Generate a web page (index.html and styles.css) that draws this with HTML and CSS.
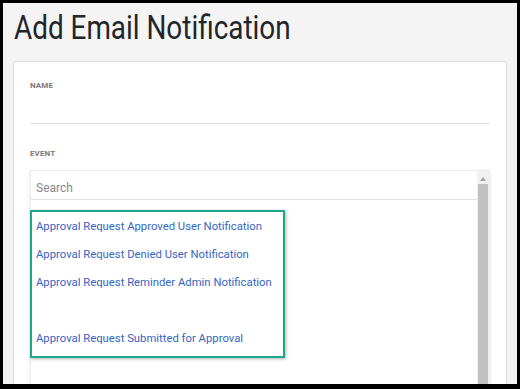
FILE: index.html
```html
<!DOCTYPE html>
<html>
<head>
<meta charset="utf-8">
<link rel="stylesheet" href="styles.css">
</head>
<body>
<div class="page">
  <h1 class="title"><span class="title-text">Add Email Notification</span></h1>
  <div class="card">
    <div class="field">
      <div class="label">NAME</div>
      <div class="input-line"></div>
    </div>
    <div class="field event">
      <div class="label">EVENT</div>
      <div class="dropdown">
        <div class="dd-main">
          <div class="search">Search</div>
          <ul class="options">
            <li>Approval Request Approved User Notification</li>
            <li>Approval Request Denied User Notification</li>
            <li>Approval Request Reminder Admin Notification</li>
            <li class="empty"></li>
            <li>Approval Request Submitted for Approval</li>
          </ul>
          <div class="highlight"></div>
        </div>
        <div class="scrollbar">
          <div class="arrow"></div>
          <div class="thumb"></div>
        </div>
      </div>
    </div>
  </div>
</div>
</body>
</html>
```
FILE: styles.css
```css
* { box-sizing: border-box; }
html, body { margin: 0; padding: 0; }
body {
  background: #000;
  padding: 3px 3px 0 3px;
  font-family: Roboto, "Liberation Sans", sans-serif;
}
.page {
  width: 514px;
  height: 381px;
  background: #f4f4f4;
  padding: 0 11px 0 11px;
  overflow: hidden;
}
.title {
  margin: 0;
  height: 59px;
  padding-top: 4px;
  font-weight: 400;
  font-size: 34px;
  line-height: 40px;
  color: #222529;
  white-space: nowrap;
}
.title-text {
  display: inline-block;
  transform: scaleX(0.82);
  transform-origin: left center;
}
.card {
  background: #fff;
  border-radius: 3px;
  box-shadow: 0 0 3px rgba(0,0,0,0.18);
  padding: 19px 16px 0 16px;
  height: 340px;
}
.label {
  font-size: 8px;
  font-weight: 700;
  color: #7a7a7a;
  line-height: 10px;
  letter-spacing: 0.1px;
}
.input-line {
  margin-top: 32px;
  height: 1px;
  background: #dcdcdc;
}
.event { margin-top: 25px; }
.event .label { margin-bottom: 11px; }
.dropdown {
  display: flex;
  border: 1px solid #ececec;
  box-shadow: 0 1px 3px rgba(0,0,0,0.12);
  height: 230px;
}
.dd-main {
  flex: 1;
  position: relative;
}
.search {
  height: 29px;
  padding: 4px 0 0 5px;
  font-size: 12px;
  line-height: 26px;
  color: #8a8a8a;
  border-bottom: 1px solid #dde1e6;
}
.options {
  list-style: none;
  margin: 0;
  padding: 13px 0 0 5px;
}
.options li {
  height: 28px;
  line-height: 28px;
  font-size: 11.3px;
  color: #3565c2;
  white-space: nowrap;
}
.highlight {
  position: absolute;
  left: -1px;
  top: 39px;
  width: 255px;
  height: 148px;
  border: 2px solid #1aa98a;
  box-shadow: 1px 1px 3px rgba(0,0,0,0.3);
}
.scrollbar {
  width: 12px;
  background: #f1f1f1;
  display: flex;
  flex-direction: column;
  align-items: center;
}
.arrow {
  margin-top: 6px;
  width: 0; height: 0;
  border-left: 3px solid transparent;
  border-right: 3px solid transparent;
  border-bottom: 4px solid #a3a3a3;
}
.thumb {
  margin-top: 3px;
  width: 10px;
  flex: 1;
  background: #c1c1c1;
}
```
